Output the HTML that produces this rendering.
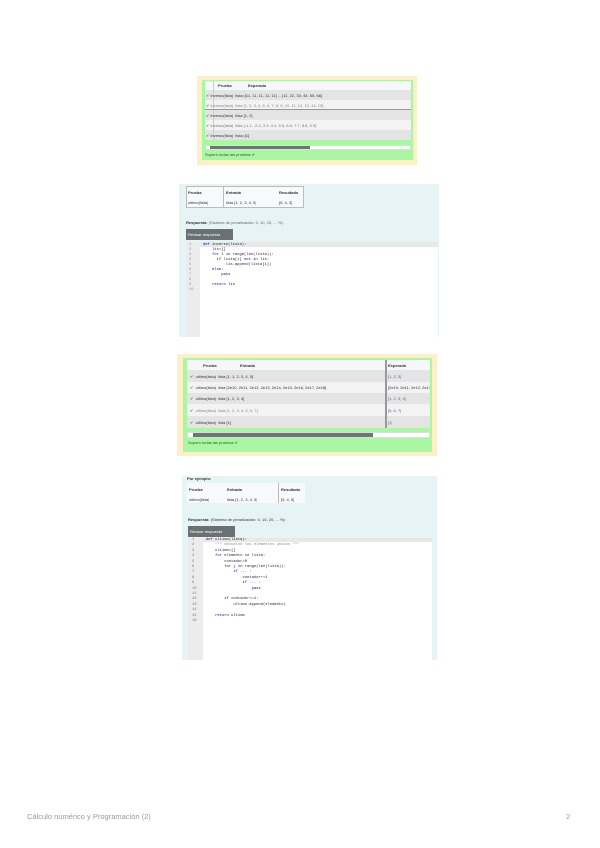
<!DOCTYPE html>
<html><head><meta charset="utf-8"><style>
*{margin:0;padding:0;box-sizing:border-box}
body{width:600px;height:848px;background:#fff;position:relative;overflow:hidden;font-family:"Liberation Sans",sans-serif}
.a{position:absolute}
.t{position:absolute;font-size:4px;line-height:5px;color:#333;white-space:nowrap;overflow:hidden}
.ck{color:#2a9a2a}
.code{font-family:"Liberation Mono",monospace;font-size:3.8px;line-height:5px;color:#223;white-space:pre}
</style></head><body>

<!-- Block 1 -->
<div class="a" style="left:197px;top:76px;width:220px;height:89px;background:#fdf0c8"></div>
<div class="a" style="left:202px;top:80px;width:211px;height:80px;background:#a9f7a2"></div>
<div class="a" style="left:205px;top:81px;width:206px;height:9px;background:#f6f7fb"></div>
<div class="a" style="left:205px;top:90px;width:206px;height:10px;background:#e4e4e4"></div>
<div class="a" style="left:205px;top:100px;width:206px;height:10px;background:#f3f3f3"></div>
<div class="a" style="left:205px;top:110px;width:206px;height:10px;background:#e4e4e4"></div>
<div class="a" style="left:205px;top:120px;width:206px;height:10px;background:#f3f3f3"></div>
<div class="a" style="left:205px;top:130px;width:206px;height:10px;background:#e4e4e4"></div>
<div class="a" style="left:213px;top:81px;width:1px;height:59px;background:#ccc"></div>
<div class="a" style="left:205px;top:109px;width:206px;height:1px;background:#999"></div>
<div class="t" style="left:218px;top:83px;font-weight:bold">Prueba</div>
<div class="t" style="left:248px;top:83px;font-weight:bold">Esperado</div>
<div class="t" style="left:206px;top:93px;width:205px"><span class="ck">✔</span> inverso(lista) &nbsp;lista=[11, 11, 11, 11, 11] ... [11, 22, 33, 44, 55, 66]</div>
<div class="t" style="left:206px;top:103px;width:205px;color:#888"><span class="ck">✔</span> inverso(lista) &nbsp;lista [1, 2, 3, 4, 5, 6, 7, 8, 9, 10, 11, 12, 13, 14, 15]</div>
<div class="t" style="left:206px;top:113px;width:205px"><span class="ck">✔</span> inverso(lista) &nbsp;lista [1, 2]</div>
<div class="t" style="left:206px;top:123px;width:205px;color:#777"><span class="ck">✔</span> inverso(lista) &nbsp;lista [-1.1, -2.2, 3.3, 4.4, 5.5, 6.6, 7.7, 8.8, 9.9]</div>
<div class="t" style="left:206px;top:133px;width:205px"><span class="ck">✔</span> inverso(lista) &nbsp;lista=[1]</div>
<div class="a" style="left:205px;top:145px;width:206px;height:5px;background:#fff;border:1px solid #ddd"></div>
<div class="a" style="left:210px;top:146px;width:100px;height:3px;background:#6e7478"></div>
<div class="t" style="left:205px;top:152px;color:#2a5a2a">Superó todas las pruebas ✔</div>

<!-- Block 2 -->
<div class="a" style="left:179px;top:184px;width:260px;height:153px;background:#e7f4f5"></div>
<div class="a" style="left:186px;top:186px;width:118px;height:22px;background:#f8f9fb;border:1px solid #bbb"></div>
<div class="a" style="left:223px;top:186px;width:1px;height:22px;background:#bbb"></div>
<div class="t" style="left:188px;top:190px;font-weight:bold">Prueba</div>
<div class="t" style="left:226px;top:190px;font-weight:bold">Entrada</div>
<div class="t" style="left:279px;top:190px;font-weight:bold">Resultado</div>
<div class="t" style="left:188px;top:200px">ultimo(lista)</div>
<div class="t" style="left:226px;top:200px">lista [1, 2, 3, 4, 5]</div>
<div class="t" style="left:279px;top:200px">[5, 4, 3]</div>
<div class="t" style="left:186px;top:220px"><b>Respuesta:</b> <span style="color:#666">(Sistema de penalización: 0, 10, 20, ... %)</span></div>
<div class="a" style="left:186px;top:229px;width:47px;height:11px;background:#6b7075"></div>
<div class="t" style="left:188px;top:232px;color:#fff">Revisar respuesta</div>
<div class="a" style="left:186px;top:242px;width:252px;height:95px;background:#fff"></div>
<div class="a" style="left:186px;top:242px;width:14px;height:95px;background:#ececec"></div>
<div class="a" style="left:200px;top:242px;width:238px;height:5px;background:#e8e8e8"></div>
<div class="code a" style="left:189px;top:243px;color:#999">1
2
3
4
5
6
7
8
9
10</div>
<div class="code a" style="left:203px;top:243px"><span style="color:#00a">def</span> inverso(lista):
    lis=[]
    <span style="color:#00a">for</span> i <span style="color:#00a">in</span> range(len(lista)):
      <span style="color:#00a">if</span> lista[i] <span style="color:#00a">not in</span> lis:
          lis.append(lista[i])
    <span style="color:#00a">else</span>:
        <span style="color:#00a">pass</span>

    <span style="color:#00a">return</span> lis</div>

<!-- Block 3 -->
<div class="a" style="left:177px;top:354px;width:260px;height:102px;background:#fdf0c8"></div>
<div class="a" style="left:183px;top:358px;width:249px;height:94px;background:#a9f7a2"></div>
<div class="a" style="left:187px;top:360px;width:243px;height:10px;background:#f6f7fb"></div>
<div class="a" style="left:187px;top:370px;width:243px;height:12px;background:#e4e4e4"></div>
<div class="a" style="left:187px;top:382px;width:243px;height:11px;background:#f3f3f3"></div>
<div class="a" style="left:187px;top:393px;width:243px;height:11px;background:#e4e4e4"></div>
<div class="a" style="left:187px;top:404px;width:243px;height:12px;background:#f3f3f3"></div>
<div class="a" style="left:187px;top:416px;width:243px;height:12px;background:#e4e4e4"></div>
<div class="a" style="left:385px;top:360px;width:2px;height:68px;background:#999"></div>
<div class="t" style="left:203px;top:363px;font-weight:bold">Prueba</div>
<div class="t" style="left:240px;top:363px;font-weight:bold">Entrada</div>
<div class="t" style="left:388px;top:363px;font-weight:bold">Esperado</div>
<div class="t" style="left:190px;top:374px;width:194px"><span class="ck">✔</span> &nbsp;ultimo(lista) &nbsp;lista [1, 1, 2, 3, 4, 5]</div>
<div class="t" style="left:388px;top:374px;color:#4466aa">[1, 2, 3]</div>
<div class="t" style="left:190px;top:385px;width:194px"><span class="ck">✔</span> &nbsp;ultimo(lista) &nbsp;lista [2e10, 2e11, 2e12, 2e13, 2e14, 2e15, 2e16, 2e17, 2e18]</div>
<div class="t" style="left:388px;top:385px;width:42px">[2e10, 2e11, 2e12, 2e13]</div>
<div class="t" style="left:190px;top:396px;width:194px"><span class="ck">✔</span> &nbsp;ultimo(lista) &nbsp;lista [1, 2, 3, 4]</div>
<div class="t" style="left:388px;top:396px;color:#4466aa">[1, 2, 3, 4]</div>
<div class="t" style="left:190px;top:408px;width:194px;color:#888"><span class="ck">✔</span> &nbsp;ultimo(lista) &nbsp;lista [1, 2, 3, 4, 5, 6, 7]</div>
<div class="t" style="left:388px;top:408px;color:#4466aa">[5, 6, 7]</div>
<div class="t" style="left:190px;top:420px;width:194px"><span class="ck">✔</span> &nbsp;ultimo(lista) &nbsp;lista [1]</div>
<div class="t" style="left:388px;top:420px;color:#4466aa">[1]</div>
<div class="a" style="left:187px;top:432px;width:243px;height:6px;background:#fff;border:1px solid #ddd"></div>
<div class="a" style="left:193px;top:433px;width:180px;height:4px;background:#6e7478"></div>
<div class="t" style="left:188px;top:440px;color:#2a5a2a">Superó todas las pruebas ✔</div>

<!-- Block 4 -->
<div class="a" style="left:182px;top:476px;width:255px;height:184px;background:#e7f4f5"></div>
<div class="t" style="left:187px;top:476px;font-weight:bold">Por ejemplo:</div>
<div class="a" style="left:187px;top:483px;width:118px;height:20px;background:#f8f9fb"></div>
<div class="a" style="left:278px;top:483px;width:1px;height:20px;background:#bbb"></div>
<div class="t" style="left:189px;top:487px;font-weight:bold">Prueba</div>
<div class="t" style="left:227px;top:487px;font-weight:bold">Entrada</div>
<div class="t" style="left:281px;top:487px;font-weight:bold">Resultado</div>
<div class="t" style="left:189px;top:497px">ultimo(lista)</div>
<div class="t" style="left:227px;top:497px">lista [1, 2, 3, 4, 5]</div>
<div class="t" style="left:281px;top:497px">[3, 4, 5]</div>
<div class="t" style="left:188px;top:517px"><b>Respuesta:</b> <span style="color:#333">(Sistema de penalización: 0, 10, 20, ... %)</span></div>
<div class="a" style="left:188px;top:526px;width:47px;height:11px;background:#6b7075"></div>
<div class="t" style="left:190px;top:529px;color:#fff">Revisar respuesta</div>
<div class="a" style="left:188px;top:538px;width:244px;height:122px;background:#fff"></div>
<div class="a" style="left:188px;top:538px;width:15px;height:122px;background:#ececec"></div>
<div class="a" style="left:203px;top:538px;width:229px;height:4px;background:#e8e8e8"></div>
<div class="code a" style="left:192px;top:538px;color:#777;line-height:5.4px">1
2
3
4
5
6
7
8
9
10
11
12
13
14
15
16</div>
<div class="code a" style="left:206px;top:538px;line-height:5.4px"><span style="color:#00a">def</span> ultimo(lista):
    <span style="color:#888">""" devuelve los elementos unicos """</span>
    ultimo=[]
    <span style="color:#00a">for</span> elemento <span style="color:#00a">in</span> lista:
        contador=0
        <span style="color:#00a">for</span> j <span style="color:#00a">in</span> range(len(lista)):
            <span style="color:#00a">if</span> ... :
                contador+=1
                <span style="color:#00a">if</span> ... :
                    <span style="color:#00a">pass</span>

        <span style="color:#00a">if</span> contador==1:
            ultimo.append(elemento)

    <span style="color:#00a">return</span> ultimo</div>

<!-- Footer -->
<div class="a" style="left:27px;top:812px;font-size:7.5px;color:#9a9a9a;white-space:nowrap">Cálculo numérico y Programación (2)</div>
<div class="a" style="left:566px;top:812px;font-size:7.5px;color:#9a9a9a">2</div>
</body></html>
